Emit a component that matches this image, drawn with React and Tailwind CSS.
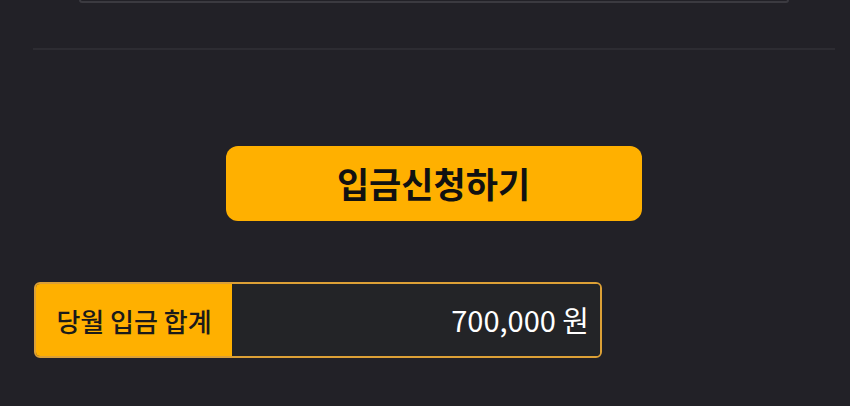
export default function App() {
  return (
    <div
      className="w-[850px] h-[406px] bg-[#222127] overflow-hidden"
      style={{ fontFamily: '"Noto Sans CJK KR", "Noto Sans", sans-serif' }}
    >
      {/* input box, cut off at top */}
      <div className="pl-[79px] pr-[61px] -mt-[40px]">
        <div className="h-[43px] border-2 border-[#3b3a40] rounded-[3px]" />
      </div>

      <div className="ml-[33px] mr-[15px] mt-[45px] h-[2px] bg-[#2d2c32]" />

      <div className="flex justify-center pl-[17px] mt-[96px]">
        <button className="w-[416px] h-[75px] rounded-[12px] bg-[#ffb000] text-[#111] text-[35px] font-bold">
          입금신청하기
        </button>
      </div>

      <div className="ml-[34px] mt-[61px] w-[568px] h-[76px] flex rounded-[6px] border-2 border-[#dca036] overflow-hidden">
        <div className="w-[196px] bg-[#ffb000] flex items-center justify-center text-[26px] font-medium text-[#1a1a1a]">
          당월 입금 합계
        </div>
        <div className="flex-1 bg-[#232427] flex items-center justify-end pr-[11px] text-[29px] text-white">
          700,000 원
        </div>
      </div>
    </div>
  );
}
